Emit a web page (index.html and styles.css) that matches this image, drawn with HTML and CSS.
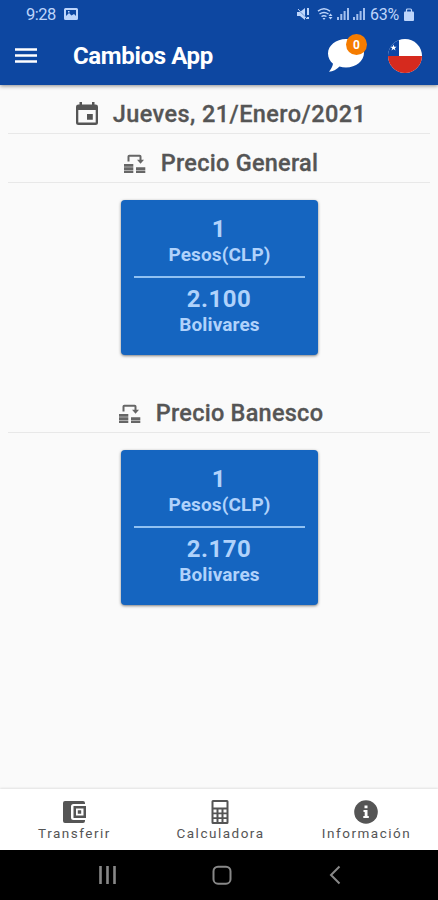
FILE: index.html
```html
<!DOCTYPE html>
<html lang="es">
<head>
<meta charset="utf-8">
<title>Cambios App</title>
<link rel="stylesheet" href="styles.css">
</head>
<body>
<svg class="defs" width="0" height="0">
  <symbol id="exchange" viewBox="0 0 22 21">
    <path d="M4.500 7.500V2.500q0-.8.8-.8h10.400q.8 0 .8.800V7" fill="none" stroke="currentColor" stroke-width="2"/>
    <path d="M13 5.800h7l-3.500 4z" fill="currentColor"/>
    <path d="M0 11.400h9.300M0 14.600h9.300M0 17.800h9.300M12 14.600h9.300M12 17.800h9.300" stroke="currentColor" stroke-width="2.600"/>
  </symbol>
</svg>
<header class="top">
  <div class="status">
    <span class="clock">9:28</span>
    <svg class="photo" viewBox="0 0 14 12" width="14" height="12"><path fill="currentColor" fill-rule="evenodd" d="M1.500 0h11Q14 0 14 1.500v9q0 1.500-1.500 1.500h-11Q0 12 0 10.500v-9Q0 0 1.500 0zM2 2v6l3-3 2.500 2.500L10 6l2 2V2zM4 3h1.500v1.500H4z"/></svg>
    <svg class="signals" viewBox="0 0 70 14" width="70" height="14" fill="currentColor">
      <path d="M0 5h3l5-4v12L3 9H0z"/><path d="M0 1l10 11" stroke="#0d47a1" stroke-width="1"/><path d="M1 2l9 10" stroke="currentColor"/><path d="M10 1h2v7h-2zM10 10h2v2h-2z"/>
      <g fill="none" stroke="currentColor" stroke-width="1.500"><path d="M21 4.200q6-4.700 12 0M22.500 7q4.500-3.200 9 0M24.500 9.500q2.500-1.700 5 0"/></g><path d="M25.500 11h3L27 13zM33.500 6.500l2 2.500h-4zM33.500 12.500l2-2.500h-4z"/>
      <path d="M40 10h2v3h-2zM43.300 7h2v6h-2zM46.600 4h2v9h-2zM50 1h2v12h-2zM56 10h2v3h-2zM59.300 7h2v6h-2zM62.600 4h2v9h-2zM66 1h2v12h-2z" opacity=".85"/>
    </svg>
    <span class="charge">63%</span>
    <svg class="battery" viewBox="0 0 10 13" width="10" height="13"><path d="M2.500 4V2q0-1 1-1h3q1 0 1 1v2" fill="none" stroke="currentColor" stroke-width="1.200"/><rect y="3.500" width="10" height="9.500" rx="1" fill="currentColor"/></svg>
  </div>
  <div class="bar">
    <svg class="menu" viewBox="0 0 22 15" width="22" height="15"><path d="M0 1.500h22M0 7.500h22M0 13.500h22" stroke="#fff" stroke-width="2.300"/></svg>
    <h1>Cambios App</h1>
    <div class="chat">
      <svg viewBox="0 0 36 34" width="36" height="34"><path fill="#fff" d="M18 0c10 0 18 6.200 18 14s-8 14.500-18 14.500c-2.300 0-4.500-.3-6.500-1C8.500 30.500 5 32.500 1 32.800c2-2.500 3.600-5.300 4-8C2 22.200 0 18.500 0 14.500 0 6.500 8 0 18 0z"/></svg>
      <span class="badge">0</span>
    </div>
    <svg class="flag" viewBox="0 0 34 34" width="34" height="34"><clipPath id="c"><circle cx="17" cy="17" r="17"/></clipPath><g clip-path="url(#c)"><path fill="#fff" d="M0 0h34v34H0z"/><path fill="#0b45a5" d="M0 0h11v17H0z"/><path fill="#d62a1e" d="M0 17h34v17H0z"/><path fill="#fff" d="M5.500 5.500l.8 2.200h2.300L6.800 9.200l.7 2.300-2-1.400-2 1.400.7-2.300L2.400 7.700h2.300z"/></g></svg>
  </div>
</header>
<main>
  <div class="heading date">
    <svg class="calendar" viewBox="0 0 22 24" width="22" height="24"><path fill="currentColor" fill-rule="evenodd" d="M3.500 0H6v2.400h10V0h2.500v2.400h1q2.500 0 2.500 2.400v15.700q0 2.500-2.500 2.500h-17Q0 23 0 20.500V4.800q0-2.400 2.500-2.400h1zM2.300 8v12.600h17.400V8zM11 12h5.800v5.800H11z"/></svg>
    <span>Jueves, 21/Enero/2021</span>
  </div>
  <div class="heading general"><svg class="swap" width="22" height="21"><use href="#exchange"/></svg><span>Precio General</span></div>
  <section class="card">
    <b>1</b><em>Pesos(CLP)</em><hr><b>2.100</b><em>Bolivares</em>
  </section>
  <div class="heading banesco"><svg class="swap" width="22" height="21"><use href="#exchange"/></svg><span>Precio Banesco</span></div>
  <section class="card">
    <b>1</b><em>Pesos(CLP)</em><hr><b>2.170</b><em>Bolivares</em>
  </section>
</main>
<nav class="tabs">
  <div class="tab"><svg viewBox="0 0 24 24" width="24" height="24"><path fill="currentColor" fill-rule="evenodd" d="M3 1h18q2 0 2 2v1H11.500Q9 4 9 6.500v11Q9 20 11.500 20H23v1q0 2-2 2H3q-2 0-2-2V3q0-2 2-2zM11.500 6H24v12H11.500zM14 8.500v7h7.500v-7zM15.800 10.300h3.400v3.400h-3.400z"/></svg><span>Transferir</span></div>
  <div class="tab"><svg viewBox="0 0 24 24" width="24" height="24"><path fill="currentColor" fill-rule="evenodd" d="M5 0h14q1.500 0 1.500 1.500v21q0 1.500-1.500 1.500H5q-1.500 0-1.500-1.500v-21Q3.500 0 5 0zM5.500 2v5.500h13V2zM5.500 9.500v3h3v-3zM10.500 9.500v3h3v-3zM15.500 9.500v3h3v-3zM5.500 14.300v3h3v-3zM10.500 14.300v3h3v-3zM15.500 14.300v3h3v-3zM5.500 19v3h3v-3zM10.500 19v3h3v-3zM15.500 19v3h3v-3z"/></svg><span>Calculadora</span></div>
  <div class="tab"><svg viewBox="0 0 24 24" width="24" height="24"><circle cx="12" cy="12" r="11.800" fill="currentColor"/><path fill="#fff" d="M10.500 5.500h3v2.700h-3zM9.500 10h4v6h1.300v2H9.300v-2h1.400v-4H9.500z"/></svg><span>Información</span></div>
</nav>
<footer class="system">
  <svg viewBox="0 0 24 24" width="24" height="24"><path d="M4.500 3v18M11.500 3v18M18.500 3v18" stroke-width="2.600"/></svg>
  <svg viewBox="0 0 24 24" width="24" height="24"><rect x="3.500" y="3.700" width="17" height="17" rx="4.500"/></svg>
  <svg viewBox="0 0 24 24" width="24" height="24"><path d="M16.500 3.500L8 12l8.500 8.500"/></svg>
</footer>
</body>
</html>
```
FILE: styles.css
```css
* { box-sizing: border-box; }
body { margin: 0; width: 438px; height: 900px; display: flex; flex-direction: column; background: #fafafa; color: #555; font-family: Roboto, sans-serif; overflow: hidden; }
svg { display: block; flex: none; }
.defs { display: none; }
.top { height: 85px; background: #0d47a1; box-shadow: 0 1px 4px rgba(0,0,0,.45); color: #bdd5fb; }
.status { height: 28px; padding: 0 24px 0 26px; display: flex; align-items: center; font-size: 16.5px; }
.clock { width: 30px; letter-spacing: -.5px; white-space: nowrap; }
.photo { margin-left: 8px; }
.signals { margin-left: auto; }
.charge { width: 30px; margin-left: 3px; font-size: 16px; letter-spacing: -.2px; }
.battery { margin-left: 4px; }
.bar { height: 55px; padding-left: 15px; display: flex; align-items: center; }
h1 { margin: 0 0 0 36px; width: 255px; color: #fff; font-size: 24px; line-height: 28px; font-weight: 700; letter-spacing: -.35px; white-space: nowrap; }
.chat { position: relative; }
.badge { position: absolute; left: 18px; top: -5px; width: 21px; height: 21px; border-radius: 50%; background: #f57c00; color: #fff; font-size: 12px; font-weight: 700; line-height: 22px; text-align: center; }
.flag { margin-left: 24px; }
main { flex: 1; padding: 0 8px; }
.heading { display: flex; align-items: center; justify-content: center; border-bottom: 1px solid #e8e8e8; font-size: 23.5px; font-weight: 500; letter-spacing: .25px; white-space: nowrap; -webkit-text-stroke: .3px currentColor; }
.date { height: 49px; padding: 10px 0 0 4px; letter-spacing: .43px; }
.date span { margin-left: 15px; }
.general { height: 49px; padding-top: 10px; }
.swap { margin: 2px 15px 0 4px; color: #666; }
.banesco { height: 49px; padding-top: 10px; margin-top: 29px; }
.card { width: 197px; height: 155px; margin: 17px auto 0; padding: 15px 13px 0; border-radius: 4px; background: #1565c0; color: #b0d2fb; box-shadow: 0 1px 3px rgba(0,0,0,.5); text-align: center; }
.card b, .card em { display: block; font-style: normal; font-weight: 700; }
.card b { font-size: 24px; line-height: 28px; letter-spacing: .5px; }
.card em { padding: 1px 0 0 1px; font-size: 19px; line-height: 21px; letter-spacing: .12px; }
.card hr { height: 2px; margin: 11px 0 7px; border: 0; background: #90c1f2; }
.tabs { height: 61px; padding-top: 11px; display: flex; background: #fff; box-shadow: 0 -1px 2px rgba(0,0,0,.1); }
.tab { flex: 1; display: flex; flex-direction: column; align-items: center; font-size: 13.5px; line-height: 16px; letter-spacing: 1.5px; }
.tab svg { margin-left: 2px; }
.tab span { margin: 1px 0 0 3px; }
.system { height: 50px; padding: 0 91px 0 96px; display: flex; justify-content: space-between; align-items: center; background: #000; fill: none; stroke: #888; stroke-width: 2; }
```
